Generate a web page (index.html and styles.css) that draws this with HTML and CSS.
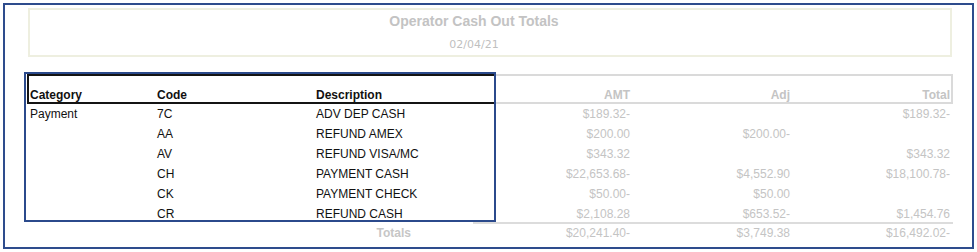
FILE: index.html
```html
<!DOCTYPE html>
<html lang="en">
<head>
<meta charset="utf-8">
<title>Operator Cash Out Totals</title>
<link rel="stylesheet" href="styles.css">
</head>
<body>
<div class="frame">
  <div class="report-head">
    <div class="title">Operator Cash Out Totals</div>
    <div class="date">02/04/21</div>
  </div>
  <div class="grid">
    <div class="th dark first">Category</div>
    <div class="th dark">Code</div>
    <div class="th dark">Description</div>
    <div class="th light split num">AMT</div>
    <div class="th light num">Adj</div>
    <div class="th light num last">Total</div>

    <div class="td">Payment</div><div class="td">7C</div><div class="td">ADV DEP CASH</div>
    <div class="td num">$189.32-</div><div class="td num"></div><div class="td num">$189.32-</div>

    <div class="td"></div><div class="td">AA</div><div class="td">REFUND AMEX</div>
    <div class="td num">$200.00</div><div class="td num">$200.00-</div><div class="td num"></div>

    <div class="td"></div><div class="td">AV</div><div class="td">REFUND VISA/MC</div>
    <div class="td num">$343.32</div><div class="td num"></div><div class="td num">$343.32</div>

    <div class="td"></div><div class="td">CH</div><div class="td">PAYMENT CASH</div>
    <div class="td num">$22,653.68-</div><div class="td num">$4,552.90</div><div class="td num">$18,100.78-</div>

    <div class="td"></div><div class="td">CK</div><div class="td">PAYMENT CHECK</div>
    <div class="td num">$50.00-</div><div class="td num">$50.00</div><div class="td num"></div>

    <div class="td"></div><div class="td">CR</div><div class="td">REFUND CASH</div>
    <div class="td num">$2,108.28</div><div class="td num">$653.52-</div><div class="td num">$1,454.76</div>

    <div class="tot blank"></div><div class="tot blank"></div><div class="tot label">Totals</div>
    <div class="tot num">$20,241.40-</div><div class="tot num">$3,749.38</div><div class="tot num">$16,492.02-</div>
  </div>
  <div class="selection"></div>
</div>
</body>
</html>
```

FILE: styles.css
```css
html, body {
  margin: 0;
  padding: 0;
  background: #ffffff;
}

body {
  font-family: "Liberation Sans", Arial, sans-serif;
  font-size: 12px;
  color: #000;
}

.frame {
  position: relative;
  box-sizing: border-box;
  width: 971px;
  height: 246px;
  margin: 3px;
  border: 2px solid #2e4c8d;
  padding: 3px 20px 0 23px;
}

.report-head {
  box-sizing: border-box;
  height: 49px;
  border: 2px solid #eeefe0;
  padding: 3px 32px 0 0;
  text-align: center;
}

.title {
  font: 700 14px/16px "Liberation Sans", Arial, sans-serif;
  color: #c3c3c3;
}

.date {
  margin-top: 9px;
  font: 400 11px/14px "DejaVu Sans", Verdana, sans-serif;
  color: #bfbfbf;
}

.grid {
  display: grid;
  grid-template-columns: 127px 159px 160px 160px 160px 160px;
  grid-template-rows: 30px repeat(6, 20px) auto;
  width: 926px;
  margin: 17px 0 0 -1px;
}

.th {
  box-sizing: border-box;
  height: 30px;
  border-top: 2px solid;
  border-bottom: 2px solid;
  padding: 12px 3px 0 3px;
  line-height: 14px;
  font-weight: 700;
  white-space: nowrap;
}

.th.dark {
  border-color: #141414;
  color: #111;
}

.th.light {
  border-color: #dadada;
  color: #c4c4c4;
}

.th.split {
  border-image: linear-gradient(to right, #141414 0 22px, #dadada 22px 100%) 2 0 / 2px 0 stretch;
}

.th.first {
  border-left: 2px solid #141414;
  padding-left: 1px;
}

.th.last {
  border-right: 2px solid #dadada;
  padding-right: 1px;
}

.td {
  line-height: 20px;
  padding: 0 3px;
  white-space: nowrap;
  color: #111;
}

.num {
  text-align: right;
}

.td.num {
  color: #c4c4c4;
}

.tot {
  margin-top: -2px;
  border-top: 2px solid transparent;
  line-height: 18px;
  padding: 0 3px;
  white-space: nowrap;
}

.tot.num {
  border-top-color: #dcdcdc;
  color: #c4c4c4;
}

.tot.label {
  text-align: right;
  padding-right: 62px;
  font-weight: 700;
  color: #c6c6c6;
}

.selection {
  position: absolute;
  left: 19px;
  top: 67px;
  width: 472px;
  height: 150px;
  box-sizing: border-box;
  border: 2px solid #2b4a8c;
  pointer-events: none;
}
```
